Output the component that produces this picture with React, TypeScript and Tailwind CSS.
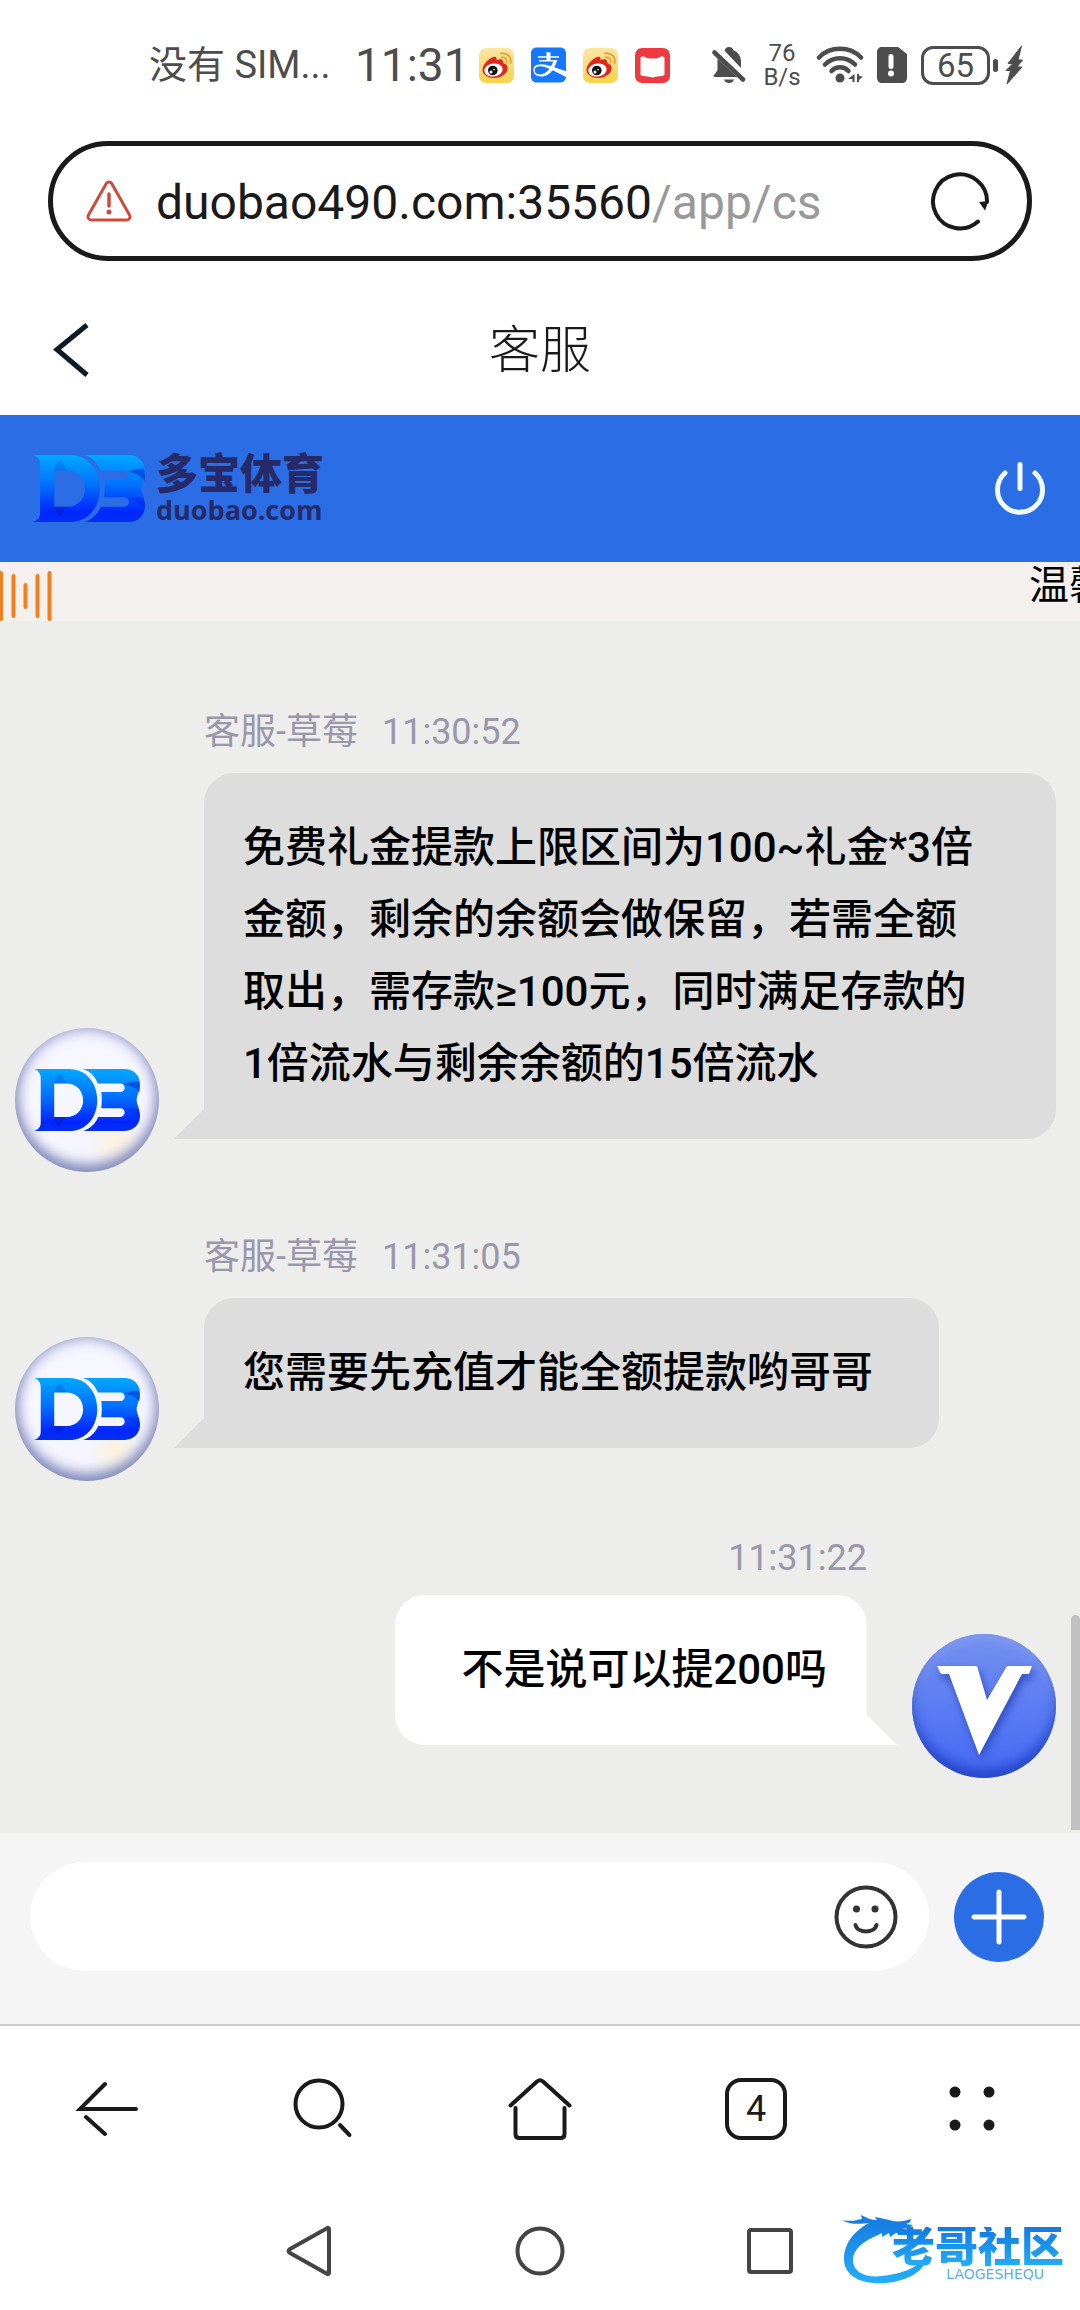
import { useState, type ReactNode } from "react";
import { FaAlipay } from "react-icons/fa";

type Message = {
  id: number;
  own?: boolean;
  name?: string;
  time: string;
  text: string;
};

const messages: Message[] = [
  {
    id: 1,
    name: "客服-草莓",
    time: "11:30:52",
    text: "免费礼金提款上限区间为100~礼金*3倍金额，剩余的余额会做保留，若需全额取出，需存款≥100元，同时满足存款的1倍流水与剩余余额的15倍流水",
  },
  { id: 2, name: "客服-草莓", time: "11:31:05", text: "您需要先充值才能全额提款哟哥哥" },
  { id: 3, own: true, time: "11:31:22", text: "不是说可以提200吗" },
];

function WeiboIcon({ id }: { id: string }) {
  return (
    <svg className="size-[35px]" viewBox="0 0 35 35">
      <defs>
        <linearGradient id={id} x1="0" y1="0" x2="0" y2="1">
          <stop offset="0" stopColor="#fbe7a6" />
          <stop offset="1" stopColor="#fbd24a" />
        </linearGradient>
      </defs>
      <rect width="35" height="35" rx="7" fill={`url(#${id})`} />
      <path d="M22 5.5c6-1.2 11 3.500 9.500 9.500" fill="none" stroke="#e8a33d" strokeWidth="2" strokeLinecap="round" />
      <path d="M22.500 9.500c3.400-.7 6 1.800 5.200 5" fill="none" stroke="#e8a33d" strokeWidth="1.800" strokeLinecap="round" />
      <path
        d="M14.500 9c2-.8 3.800.3 3 3.300 3.500-1.800 7.500-1.200 6.500 2.700 2.600.8 4.700 2.300 4.700 5.300 0 5-6.500 9.700-13.200 9.700S3.500 26.700 3.500 22c0-5 5.500-11.300 11-13z"
        fill="#e1251b"
      />
      <ellipse cx="14.500" cy="22" rx="9.200" ry="6.500" fill="#fff" transform="rotate(-8 14.500 22)" />
      <circle cx="13.800" cy="22.500" r="4.800" fill="#111" />
      <circle cx="12" cy="24" r="1.500" fill="#fff" />
      <circle cx="15" cy="21.800" r=".8" fill="#fff" />
    </svg>
  );
}

function StatusBar() {
  return (
    <div className="flex h-[130px] items-center pl-[149px] pr-[56px] text-[#4d4d4d]">
      <span className="w-[206px] shrink-0 whitespace-nowrap text-[38px] leading-none">没有 SIM...</span>
      <span className="w-[124px] shrink-0 text-[46px] leading-none">11:31</span>
      <div className="flex shrink-0 gap-[17px]">
        <WeiboIcon id="weibo-a" />
        <div className="flex size-[35px] items-center justify-center">
          <FaAlipay className="h-[40px] w-[35px] shrink-0 text-[#1677ff]" />
        </div>
        <WeiboIcon id="weibo-b" />
        <svg className="size-[35px]" viewBox="0 0 35 35">
          <rect width="35" height="35" rx="7" fill="#ee3a3f" />
          <path d="M5.500 9.500 8 8l4 2c3 .8 8 .8 11 0l4-2 2.500 1.500v17.500L27 28c-4 .3-5.500.5-9.500 1.500C13.500 28.500 12 28.300 8 28l-2.500-1z" fill="#fff" />
        </svg>
      </div>
      <div className="ml-auto flex shrink-0 items-center">
        <svg className="h-[38px] w-[34px]" viewBox="0 0 34 38" fill="currentColor">
          <path d="M12.500 4.800C13 2.600 14.500 1 17 1s4 1.400 4.600 3.500C26.500 6.500 29 10.500 29 16v6z" />
          <path d="M5.500 12.500 25 31H4c-3 0-3-2-1-3l2.500-4z" />
          <path d="M2.500 6.500 31 33.500" stroke="currentColor" strokeWidth="4.500" strokeLinecap="round" />
          <path d="M12 33.500h10c-.8 2.500-2.600 3.500-5 3.500s-4.200-1-5-3.500z" />
        </svg>
        <div className="ml-[17px] flex w-[38px] flex-col items-center text-2xl leading-6">
          <span>76</span>
          <span>B/s</span>
        </div>
        <svg className="ml-[15px] h-[38px] w-[48px]" viewBox="0 0 48 38" fill="none" stroke="currentColor">
          <path d="M3 11.500C14-.2 34-.2 45 11.500" strokeWidth="4.500" strokeLinecap="round" />
          <path d="M9 18.500c8-8.500 22-8.500 30 0" strokeWidth="4.500" strokeLinecap="round" />
          <path d="M15.500 25c4.500-5 12.500-5 17 0" strokeWidth="4.500" strokeLinecap="round" />
          <circle cx="24" cy="32" r="4.500" fill="currentColor" stroke="none" />
          <path d="M38.500 28v8h-2v-3H32zM41 28v8h2v-2l4-3.500-4-.5v-2z" fill="currentColor" stroke="none" />
        </svg>
        <svg className="ml-[13px] h-[36px] w-[30px]" viewBox="0 0 30 36">
          <path d="M5 0h16l9 7v24c0 3-2 5-5 5H5c-3 0-5-2-5-5V5c0-3 2-5 5-5z" fill="currentColor" />
          <path d="M14 9.500v10" stroke="#fff" strokeWidth="5" strokeLinecap="round" />
          <circle cx="14" cy="26.500" r="3" fill="#fff" />
        </svg>
        <div className="ml-[14px] flex h-[39px] w-[69px] items-center justify-center rounded-xl border-3 border-current text-[33px] leading-none">
          65
        </div>
        <div className="ml-[3px] h-[13px] w-[5px] rounded-sm bg-current" />
        <svg className="ml-[7px] h-[40px] w-[19px]" viewBox="0 0 19 40" fill="currentColor">
          <path d="M16.500 1 3 18.500h5L1 25.500h4.500L2 39l15-17h-5l5.500-7H13z" stroke="currentColor" strokeLinejoin="round" />
        </svg>
      </div>
    </div>
  );
}

function AddressBar() {
  return (
    <div className="mx-12 mt-[11px] flex h-[120px] items-center rounded-full border-5 border-[#1a1a1a] pl-[33px] pr-[37px]">
      <svg className="h-[42px] w-[46px] shrink-0" viewBox="0 0 46 42" fill="none" stroke="#cf4a3c" strokeWidth="3">
        <path d="M20.300 3.500 2.500 35c-1.300 2.300.2 5 2.700 5h35.600c2.500 0 4-2.700 2.700-5L25.700 3.500c-1.200-2-4.200-2-5.400 0z" />
        <path d="M23 14v12" strokeLinecap="round" strokeWidth="3.500" />
        <circle cx="23" cy="32" r="2.500" fill="#cf4a3c" stroke="none" />
      </svg>
      <div className="ml-[24px] flex-1 whitespace-nowrap pt-1 text-[48px] leading-none text-[#1a1a1a]">
        duobao490.com:35560<span className="text-[#999]">/app/cs</span>
      </div>
      <button type="button" aria-label="刷新" className="shrink-0">
        <svg className="size-[60px]" viewBox="0 0 60 60" fill="none" stroke="#1a1a1a" strokeWidth="4">
          <path d="M48 50.500A27 27 0 1 1 57 31" strokeLinecap="round" />
          <path d="m49 31 9.500-1-3.500 9.500z" fill="#1a1a1a" stroke="none" />
        </svg>
      </button>
    </div>
  );
}

function DbMark({ id, className }: { id: string; className: string }) {
  return (
    <svg className={className} viewBox="0 0 315 185" preserveAspectRatio="none">
      <defs>
        <linearGradient id={id} x1="0" y1="0" x2="0" y2="1">
          <stop offset="0" stopColor="#00a8ff" />
          <stop offset=".45" stopColor="#0070ff" />
          <stop offset=".85" stopColor="#0026ff" />
          <stop offset="1" stopColor="#0030f0" />
        </linearGradient>
      </defs>
      <path
        fillRule="evenodd"
        d="M0 0h105c50 0 83 42 83 93s-33 92-83 92H0c14-4 20-12 20-26V28C20 14 14 4 0 0zm60 43v100h36c30 0 50-22 50-50s-20-50-50-50z"
        fill={`url(#${id})`}
      />
      <path
        d="M145 0h124c28 0 46 20 46 45 0 20-10 36-10 48s10 26 10 46c0 26-18 46-46 46H145c20-6 36-20 46-42h65c18 0 18-26 0-26h-56c2-16 2-32 0-48h56c18 0 18-26 0-26h-66C180 20 166 6 145 0z"
        fill={`url(#${id})`}
      />
      <path d="M60 43h36L80 14C68 20 61 30 60 43z" fill="#0050d0" opacity=".3" />
      <path d="M60 143h34l-16 26c-12-6-18-16-18-26z" fill="#0018a0" opacity=".35" />
      <path d="M266 47c22 2 38 10 48 24 2-12 1-22-2-32-14-2-30 0-46 8z" fill="#0018c0" opacity=".45" />
      <path d="M266 120c20 4 36 14 47 30 2-12 1-20-3-30-14-5-28-5-44 0z" fill="#0018c0" opacity=".3" />
    </svg>
  );
}

function SiteHeader() {
  return (
    <>
      <header className="grid h-[154px] grid-cols-3 items-center px-[50px] pt-6">
        <button type="button" aria-label="返回" className="justify-self-start">
          <svg className="h-[56px] w-[40px]" viewBox="0 0 40 56" fill="none" stroke="#0d1b26" strokeWidth="5">
            <path d="M37 3 7 27.500 37 53" />
          </svg>
        </button>
        <h1 className="text-center text-[51px] font-light leading-none text-[#1a1a1a]">客服</h1>
      </header>
      <div className="flex h-[147px] items-center bg-[#2b6de5] pl-[33px] pr-[33px]">
        <DbMark id="db-header" className="h-[67px] w-[112px]" />
        <div className="ml-[11px] flex flex-col text-[#262a68]">
          <span className="text-[42px] font-black leading-[42px]">多宝体育</span>
          <span className="font-['Open_Sans',sans-serif] text-[27px] font-bold leading-[28px]">duobao.com</span>
        </div>
        <button type="button" aria-label="退出" className="ml-auto">
          <svg className="size-[54px]" viewBox="0 0 54 54" fill="none" stroke="#f4fbff" strokeWidth="5" strokeLinecap="round">
            <path d="M12 11a22.500 22.500 0 1 0 30 0" />
            <path d="M27 2.500v24" />
          </svg>
        </button>
      </div>
      <div className="flex h-[59px] items-start justify-between bg-[#f3f0ee]">
        <svg className="mt-[9px] h-[50px] w-[52px]" viewBox="0 0 52 50" stroke="#f08020" strokeWidth="4" strokeLinecap="round">
          <path d="M1 2v46M13.500 5v40M25.500 14v22M37.500 5v40M49.500 2v46" />
        </svg>
        <div className="w-[51px] overflow-hidden whitespace-nowrap text-[40px] leading-[48px] text-black">温馨提示</div>
      </div>
    </>
  );
}

function AgentAvatar({ id }: { id: string }) {
  return (
    <div className="flex size-36 shrink-0 items-center justify-center rounded-full bg-[radial-gradient(circle_at_70%_80%,#fdf1dc_0%,#f4f5fe_18%,#f6f7ff_60%)] shadow-[inset_0_-6px_14px_#8088b8,inset_0_0_16px_#9aa2d0]">
      <DbMark id={id} className="h-[62px] w-[106px]" />
    </div>
  );
}

function UserAvatar() {
  return (
    <div className="flex size-36 shrink-0 items-center justify-center rounded-full bg-linear-to-b from-[#7490f0] to-[#4468f5] shadow-[inset_0_-8px_12px_#2445c8,inset_0_4px_10px_#8aa0f0]">
      <svg className="size-36 drop-shadow-[2px_5px_4px_#2c4bc0]" viewBox="0 0 144 144" fill="#fff">
        <path d="M25 32h40l10 34 20-34h25l-3 8h-7L67 121 37 40h-8z" />
      </svg>
    </div>
  );
}

function Bubble({ own, children }: { own?: boolean; children: ReactNode }) {
  if (own) {
    return (
      <div className="relative rounded-[30px] rounded-br-none bg-white py-[39px] pl-[66px] pr-[40px]">
        {children}
        <span className="absolute bottom-0 left-full size-[30px] bg-white [clip-path:polygon(0_0,0_100%,100%_100%)]" />
      </div>
    );
  }
  return (
    <div className="relative rounded-[30px] rounded-bl-none bg-[#ddd] py-[39px] pl-[39px] pr-[66px]">
      {children}
      <span className="absolute bottom-0 right-full size-[30px] bg-[#ddd] [clip-path:polygon(100%_0,100%_100%,0_100%)]" />
    </div>
  );
}

function ChatMessage({ message }: { message: Message }) {
  const { own, name, time, text } = message;
  const body = <p className="text-[42px] font-medium leading-[72px] text-black">{text}</p>;

  if (own) {
    return (
      <li className="-mt-2 flex items-end justify-end gap-[45px]">
        <div className="mb-[33px] flex flex-col items-end gap-3">
          <time className="text-4xl leading-[50px] text-[#9a97ad]">{time}</time>
          <Bubble own>{body}</Bubble>
        </div>
        <UserAvatar />
      </li>
    );
  }
  return (
    <li className="flex items-end gap-[45px]">
      <AgentAvatar id={`db-${message.id}`} />
      <div className="mb-[33px] flex min-w-0 flex-col items-start gap-4">
        <div className="flex gap-6 text-4xl leading-[50px] text-[#9a97ad]">
          <span>{name}</span>
          <time>{time}</time>
        </div>
        <Bubble>{body}</Bubble>
      </div>
    </li>
  );
}

function Composer() {
  const [draft, setDraft] = useState("");
  return (
    <form className="flex items-center gap-[25px] bg-[#f5f5f5] pb-[53px] pl-[30px] pr-[36px] pt-[29px]" onSubmit={(e) => e.preventDefault()}>
      <div className="flex h-[109px] min-w-0 flex-1 items-center rounded-full bg-white pl-10 pr-[31px]">
        <input
          aria-label="消息"
          value={draft}
          onChange={(e) => setDraft(e.target.value)}
          className="min-w-0 flex-1 bg-transparent text-[42px] outline-none"
        />
        <button type="button" aria-label="表情" className="shrink-0">
          <svg className="size-[64px]" viewBox="0 0 64 64" fill="none" stroke="#333" strokeWidth="4">
            <circle cx="32" cy="32" r="29.500" />
            <circle cx="22.500" cy="24" r="3.500" fill="#333" stroke="none" />
            <circle cx="41" cy="24" r="3.500" fill="#333" stroke="none" />
            <path d="M21.500 40c2 8.500 19 8.500 21 0" strokeLinecap="round" />
          </svg>
        </button>
      </div>
      <button type="button" aria-label="更多" className="size-[90px] shrink-0 rounded-full bg-[#2b6de5]">
        <svg className="size-[90px]" viewBox="0 0 90 90" stroke="#fff" strokeWidth="5" strokeLinecap="round">
          <path d="M45 20v50M20 45h50" />
        </svg>
      </button>
    </form>
  );
}

function BrowserToolbar() {
  const icon = "size-[64px]";
  return (
    <nav className="grid h-[168px] grid-cols-5 place-items-center border-t-2 border-[#ccc] text-[#1a1a1a]">
      <button type="button" aria-label="后退">
        <svg className={icon} viewBox="0 0 64 64" fill="none" stroke="currentColor" strokeWidth="4" strokeLinecap="round">
          <path d="M60 32H4L29 7M10 40l19 17" />
        </svg>
      </button>
      <button type="button" aria-label="搜索">
        <svg className={icon} viewBox="0 0 64 64" fill="none" stroke="currentColor" strokeWidth="4" strokeLinecap="round">
          <circle cx="27" cy="27" r="23.500" />
          <path d="m48 48 9.500 10" />
        </svg>
      </button>
      <button type="button" aria-label="主页">
        <svg className={icon} viewBox="0 0 64 64" fill="none" stroke="currentColor" strokeWidth="4" strokeLinecap="round" strokeLinejoin="round">
          <path d="M2.500 28.500 29 4.500c2-1.600 4-1.600 6 0l26.500 24" />
          <path d="M7.500 31v26c0 2.500 1.500 4 4 4h41c2.500 0 4-1.500 4-4V31" />
        </svg>
      </button>
      <button type="button" aria-label="标签页" className="flex size-[62px] items-center justify-center rounded-2xl border-4 border-current text-4xl leading-none">
        4
      </button>
      <button type="button" aria-label="菜单">
        <svg className={icon} viewBox="0 0 64 64" fill="currentColor">
          <circle cx="15" cy="15" r="5.500" />
          <circle cx="49" cy="15" r="5.500" />
          <circle cx="15" cy="48" r="5.500" />
          <circle cx="49" cy="48" r="5.500" />
        </svg>
      </button>
    </nav>
  );
}

function SystemNav() {
  return (
    <div className="relative flex h-[118px] items-center justify-center gap-[178px] text-[#444]">
      <button type="button" aria-label="返回">
        <svg className="size-[52px]" viewBox="0 0 52 52" fill="none" stroke="currentColor" strokeWidth="4" strokeLinejoin="round">
          <path d="M45 4v44c0 1-1 1.500-2 .8L6 28c-2-1.200-2-2.800 0-4L43 3.200c1-.7 2-.2 2 .8z" />
        </svg>
      </button>
      <button type="button" aria-label="桌面">
        <svg className="size-[52px]" viewBox="0 0 52 52" fill="none" stroke="currentColor" strokeWidth="4">
          <circle cx="26" cy="26" r="22.500" />
        </svg>
      </button>
      <button type="button" aria-label="最近任务">
        <svg className="size-[52px]" viewBox="0 0 52 52" fill="none" stroke="currentColor" strokeWidth="4">
          <rect x="5" y="5" width="42" height="42" rx="2" />
        </svg>
      </button>

      {/* community watermark */}
      <div className="absolute right-[16px] top-[20px] flex h-[74px] w-[224px] flex-col items-end">
        <svg className="absolute left-0 top-0 h-[74px] w-[100px]" viewBox="0 0 100 74">
          <defs>
            <linearGradient id="dragon" x1="0" y1="0" x2="0" y2="1">
              <stop offset="0" stopColor="#1579e0" />
              <stop offset="1" stopColor="#25aef8" />
            </linearGradient>
          </defs>
          <path
            d="M2 8c10 2 14 0 20-1l-1-4c6 3 10 5 16 5l-2-3c7 1 13 3 18 4 6 1 12 0 18-2 0 3-2 4-5 5l7 1c-3 3-8 4-12 4 4 0 7 2 10 1-3 4-10 4-15 3l-6 4-1-4-7 4v-4l-6 3C24 29 13 37 13 48c0 13 14 18 29 16 20-2 39-9 44-22 3 14-16 27-40 29C19 73 4 63 4 47 4 30 16 18 29 11c-8 1-20 2-27-3z"
            fill="url(#dragon)"
          />
        </svg>
        <span className="relative mt-[15px] bg-linear-to-b from-[#1579e0] to-[#25aef8] bg-clip-text text-[43px] font-black leading-[40px] text-transparent">
          老哥社区
        </span>
        <span className="relative mr-5 font-['DejaVu_Sans',sans-serif] text-sm leading-[14px] text-[#5ab0ee]">LAOGESHEQU</span>
      </div>
    </div>
  );
}

export default function App() {
  return (
    <div className="flex min-h-screen w-full flex-col overflow-hidden bg-white font-['Roboto','Noto_Sans_CJK_SC',sans-serif]">
      <StatusBar />
      <AddressBar />
      <SiteHeader />
      <main className="relative flex-1 bg-[#ededeb]">
        <ul className="flex flex-col gap-[60px] pb-[54px] pl-[15px] pr-6 pt-[86px]">
          {messages.map((m) => (
            <ChatMessage key={m.id} message={m} />
          ))}
        </ul>
        <div className="absolute bottom-[3px] right-0 h-[215px] w-[9px] rounded-t-full bg-[#c1c1c1]" />
      </main>
      <Composer />
      <BrowserToolbar />
      <SystemNav />
    </div>
  );
}
